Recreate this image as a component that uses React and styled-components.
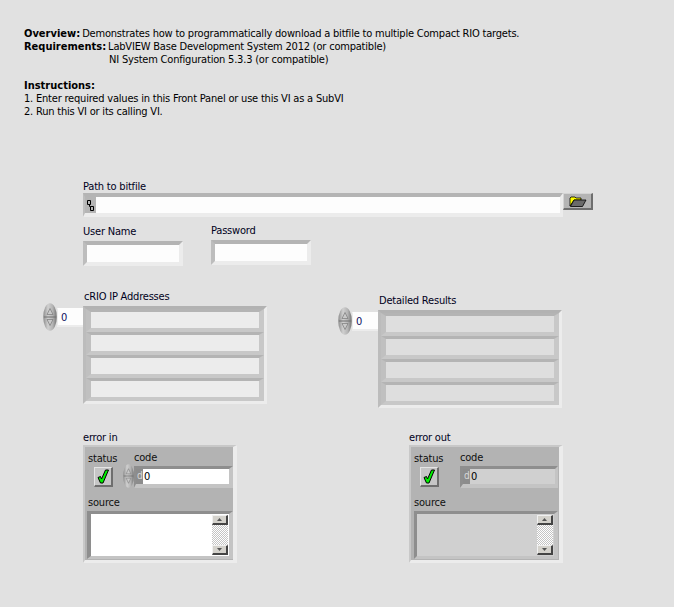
import React from 'react'
import styled, { createGlobalStyle } from 'styled-components'

const Global = createGlobalStyle`
  html, body {
    margin: 0;
    background: #e1e1e1;
  }
`

function Spinner({ small }) {
  const id = small ? 'spin-small' : 'spin'
  return (
    <SpinnerBody $small={small}>
      <svg width="100%" height="100%" viewBox="0 0 14 28" preserveAspectRatio="none">
        <defs>
          <linearGradient id={id} x1="0" x2="1" y1="0" y2="0">
            <stop offset="0" stopColor="#8c8c8c" />
            <stop offset="0.35" stopColor="#d0d0d0" />
            <stop offset="0.7" stopColor="#b4b4b4" />
            <stop offset="1" stopColor="#747474" />
          </linearGradient>
        </defs>
        <ellipse cx="7" cy="14" rx="6.8" ry="13.8" fill={`url(#${id})`} />
        <path d="M1 14h12" stroke="#6e6e6e" strokeWidth="1" />
        <path d="M7 5.5l-3 6h6z" fill="#c9c9c9" stroke="#7a7a7a" strokeWidth="0.7" />
        <path d="M7 22.5l-3-6h6z" fill="#c9c9c9" stroke="#7a7a7a" strokeWidth="0.7" />
      </svg>
    </SpinnerBody>
  )
}

function FolderIcon() {
  return (
    <svg width="18" height="11" viewBox="0 0 18 11">
      <path d="M1 10V2l1-1h4l1 1h5v2H5L1 10z" fill="#ffff00" stroke="#000" strokeWidth="0.8" />
      <path d="M1.5 10.5L5 4h12l-3.5 6.5z" fill="#6a6a6a" stroke="#000" strokeWidth="0.8" />
    </svg>
  )
}

function PathIcon() {
  return (
    <svg width="7" height="11" viewBox="0 0 7 11">
      <path d="M.5.5h3v4h-3zM3.5 6.5h3v4h-3zM2.5 4.5v2h1" fill="none" stroke="#000" strokeWidth="1" />
    </svg>
  )
}

function CheckButton() {
  return (
    <StatusLed>
      <svg width="12" height="15" viewBox="0 0 12 15">
        <path
          d="M1 8.5l2.5-1 1 2.5L8.5 1H11.5L6 14H3.5z"
          fill="#00f000"
          stroke="#000"
          strokeWidth="1"
        />
      </svg>
    </StatusLed>
  )
}

function ScrollBar() {
  return (
    <Scroll>
      <ScrollButton>
        <svg width="5" height="3" viewBox="0 0 5 3">
          <path d="M2.5 0L5 3H0z" fill="#555" />
        </svg>
      </ScrollButton>
      <ScrollTrack />
      <ScrollButton>
        <svg width="5" height="3" viewBox="0 0 5 3">
          <path d="M2.5 3L5 0H0z" fill="#555" />
        </svg>
      </ScrollButton>
    </Scroll>
  )
}

function ArrayControl({ label, indicator }) {
  return (
    <ArrayWrap>
      <IndexGroup>
        <Spinner />
        <IndexBox>0</IndexBox>
      </IndexGroup>
      <div>
        <ArrayLabel>{label}</ArrayLabel>
        <ArrayFrame>
          {[0, 1, 2, 3].map(i => (
            <ArrayCell key={i} $indicator={indicator} />
          ))}
        </ArrayFrame>
      </div>
    </ArrayWrap>
  )
}

function ErrorCluster({ label, indicator }) {
  return (
    <div>
      <Label>{label}</Label>
      <Cluster>
        <ClusterTop>
          <StatusColumn>
            <ClusterLabel>status</ClusterLabel>
            <CheckButton />
          </StatusColumn>
          {!indicator && (
            <ClusterSpinner>
              <Spinner small />
            </ClusterSpinner>
          )}
          <CodeColumn $indicator={indicator}>
            <ClusterLabel>code</ClusterLabel>
            <CodeBox $indicator={indicator}>
              <Radix>d</Radix>
              <CodeValue>0</CodeValue>
            </CodeBox>
          </CodeColumn>
        </ClusterTop>
        <SourceLabel>source</SourceLabel>
        <SourceBox $indicator={indicator}>
          <ScrollBar />
        </SourceBox>
      </Cluster>
    </div>
  )
}

export default function App() {
  return (
    <Panel>
      <Global />
      <Notes>
        <Row>
          <NoteKey>Overview:</NoteKey>
          <span>Demonstrates how to programmatically download a bitfile to multiple Compact RIO targets.</span>
        </Row>
        <Row>
          <NoteKey>Requirements:</NoteKey>
          <span>
            LabVIEW Base Development System 2012 (or compatible)
            <br />
            <SecondLine>NI System Configuration 5.3.3 (or compatible)</SecondLine>
          </span>
        </Row>
        <Spacer />
        <NoteKey>Instructions:</NoteKey>
        <div>1. Enter required values in this Front Panel or use this VI as a SubVI</div>
        <div>2. Run this VI or its calling VI.</div>
      </Notes>

      <PathSection>
        <Label>Path to bitfile</Label>
        <PathRow>
          <PathBox>
            <PathTag>
              <PathIcon />
            </PathTag>
          </PathBox>
          <BrowseButton>
            <FolderIcon />
          </BrowseButton>
        </PathRow>
      </PathSection>

      <Credentials>
        <UserColumn>
          <Label>User Name</Label>
          <TextBox />
        </UserColumn>
        <div>
          <Label>Password</Label>
          <TextBox />
        </div>
      </Credentials>

      <Arrays>
        <ArrayControl label="cRIO IP Addresses" />
        <ResultsColumn>
          <ArrayControl label="Detailed Results" indicator />
        </ResultsColumn>
      </Arrays>

      <Errors>
        <ErrorCluster label="error in" />
        <ErrorCluster label="error out" indicator />
      </Errors>
    </Panel>
  )
}

const Panel = styled.main`
  box-sizing: border-box;
  width: 674px;
  height: 607px;
  padding-top: 27px;
  background: #e1e1e1;
  color: #000;
  font-family: 'DejaVu Sans Condensed', 'DejaVu Sans', sans-serif;
  font-stretch: condensed;
  font-size: 11px;
  line-height: 13px;
  letter-spacing: -0.2px;
  overflow: hidden;
  * {
    box-sizing: border-box;
  }
`
const Notes = styled.section`
  margin-left: 24px;
  height: 129px;
  color: #000;
`
const Row = styled.div`
  display: flex;
  gap: 2px;
`
const NoteKey = styled.div`
  font-weight: bold;
  letter-spacing: 0;
`
const SecondLine = styled.span`
  margin-left: 1px;
`
const Spacer = styled.div`
  height: 13px;
`
const Label = styled.div`
  height: 14px;
  color: #000020;
`
const PathSection = styled.section`
  margin: 24px 0 0 83px;
`
const PathRow = styled.div`
  display: flex;
  align-items: flex-start;
  margin-top: -1px;
`
const PathBox = styled.div`
  width: 480px;
  height: 24px;
  border-style: solid;
  border-width: 4px 3px 4px 2px;
  border-color: #b4b4b4 #ececec #ececec #bdbdbd;
  background: #fdfdfd;
`
const PathTag = styled.div`
  display: flex;
  align-items: center;
  justify-content: center;
  width: 11px;
  height: 100%;
  background: #b5b5b5;
`
const BrowseButton = styled.button`
  display: flex;
  align-items: center;
  justify-content: center;
  width: 30px;
  height: 17px;
  margin: 0;
  padding: 0;
  border-style: solid;
  border-width: 1px 2px 2px 1px;
  border-color: #d4d4d4 #6e6e6e #6e6e6e #d4d4d4;
  background: #b4b4b4;
`
const Credentials = styled.section`
  display: flex;
  margin: 7px 0 0 83px;
`
const UserColumn = styled.div`
  width: 128px;
  margin-top: 1px;
`
const TextBox = styled.div`
  width: 100px;
  height: 25px;
  margin-top: 2px;
  border-style: solid;
  border-width: 4px;
  border-color: #b4b4b4 #ececec #ececec #bdbdbd;
  background: #fdfdfd;
`
const Arrays = styled.section`
  display: flex;
  margin: 24px 0 0 43px;
`
const ResultsColumn = styled.div`
  margin: 4px 0 0 71px;
`
const ArrayWrap = styled.div`
  display: flex;
  align-items: flex-start;
`
const IndexGroup = styled.div`
  display: flex;
  align-items: flex-start;
  margin-top: 13px;
`
const SpinnerBody = styled.div`
  display: flex;
  width: ${p => (p.$small ? '11px' : '14px')};
  height: ${p => (p.$small ? '24px' : '28px')};
`
const IndexBox = styled.div`
  width: 26px;
  height: 19px;
  margin-top: 5px;
  padding: 2px 0 0 3px;
  border-style: solid;
  border-width: 1px 0 2px 1px;
  border-color: #fdfdfd #ececec #ececec #ececec;
  background: #fdfdfd;
  color: #101060;
`
const ArrayLabel = styled(Label)`
  height: 16px;
  margin-left: 1px;
`
const ArrayFrame = styled.div`
  display: flex;
  flex-direction: column;
  width: 184px;
  height: 98px;
  border-style: solid;
  border-width: 3px;
  border-color: #b2b2b2 #ececec #ececec #bcbcbc;
`
const ArrayCell = styled.div`
  height: 23px;
  border-style: solid;
  border-width: 3px 5px 4px 5px;
  border-color: #b4b4b4 #c8c8c8 #c8c8c8 #c0c0c0;
  background: ${p => (p.$indicator ? '#dedede' : '#ececec')};
`
const Errors = styled.section`
  display: flex;
  gap: 172px;
  margin: 23px 0 0 83px;
`
const Cluster = styled.div`
  width: 154px;
  height: 118px;
  border-style: solid;
  border-width: 2px 4px 3px 2px;
  border-color: #c8c8c8 #ececec #ececec #c8c8c8;
  background: #b3b3b3;
`
const ClusterTop = styled.div`
  display: flex;
  height: 49px;
  padding: 5px 0 0 3px;
`
const StatusColumn = styled.div`
  width: 35px;
`
const ClusterLabel = styled.div`
  height: 14px;
  color: #101010;
  white-space: nowrap;
`
const SourceLabel = styled(ClusterLabel)`
  height: 15px;
  margin-left: 3px;
`
const StatusLed = styled.div`
  display: flex;
  align-items: center;
  justify-content: center;
  width: 19px;
  height: 20px;
  margin: 1px 0 0 6px;
  border-style: solid;
  border-width: 1px 2px 2px 1px;
  border-color: #e4e4e4 #6e6e6e #6e6e6e #e4e4e4;
  background: #c6c6c6;
`
const ClusterSpinner = styled.div`
  margin-top: 12px;
`
const CodeColumn = styled.div`
  flex: 1;
  margin: -1px ${p => (p.$indicator ? '1px' : '0')} 0 ${p => (p.$indicator ? '11px' : '0')};
`
const CodeBox = styled.div`
  display: flex;
  height: 22px;
  margin-top: 1px;
  border-style: solid;
  border-width: ${p => (p.$indicator ? '3px 3px 4px 3px' : '3px 4px 4px 2px')};
  border-color: #8e8e8e #c4c4c4 #c4c4c4 #8e8e8e;
  background: ${p => (p.$indicator ? '#d0d0d0' : '#fff')};
`
const Radix = styled.div`
  width: 7px;
  padding-left: 1px;
  background: #8c8c8c;
  color: #d8d8d8;
  font-size: 10px;
`
const CodeValue = styled.div`
  padding: 1px 0 0 1px;
`
const SourceBox = styled.div`
  display: flex;
  justify-content: flex-end;
  height: 48px;
  margin: 0 ${p => (p.$indicator ? '1px 0 3px' : '0 0 2px')};
  padding: 1px;
  border-style: solid;
  border-width: ${p => (p.$indicator ? '3px 4px 3px 3px' : '3px 4px')};
  border-color: #8e8e8e #c4c4c4 #c4c4c4 #8e8e8e;
  background: ${p => (p.$indicator ? '#d0d0d0' : '#fff')};
`
const Scroll = styled.div`
  display: flex;
  flex-direction: column;
  width: 16px;
  height: 100%;
`
const ScrollButton = styled.div`
  display: flex;
  align-items: center;
  justify-content: center;
  height: 10px;
  border-style: solid;
  border-width: 1px 2px 2px 1px;
  border-color: #f0f0f0 #444 #444 #f0f0f0;
  background: #d4d2cc;
`
const ScrollTrack = styled.div`
  flex: 1;
  background: repeating-conic-gradient(#fff 0 25%, #c4c4c4 0 50%) 0 0 / 2px 2px;
`
